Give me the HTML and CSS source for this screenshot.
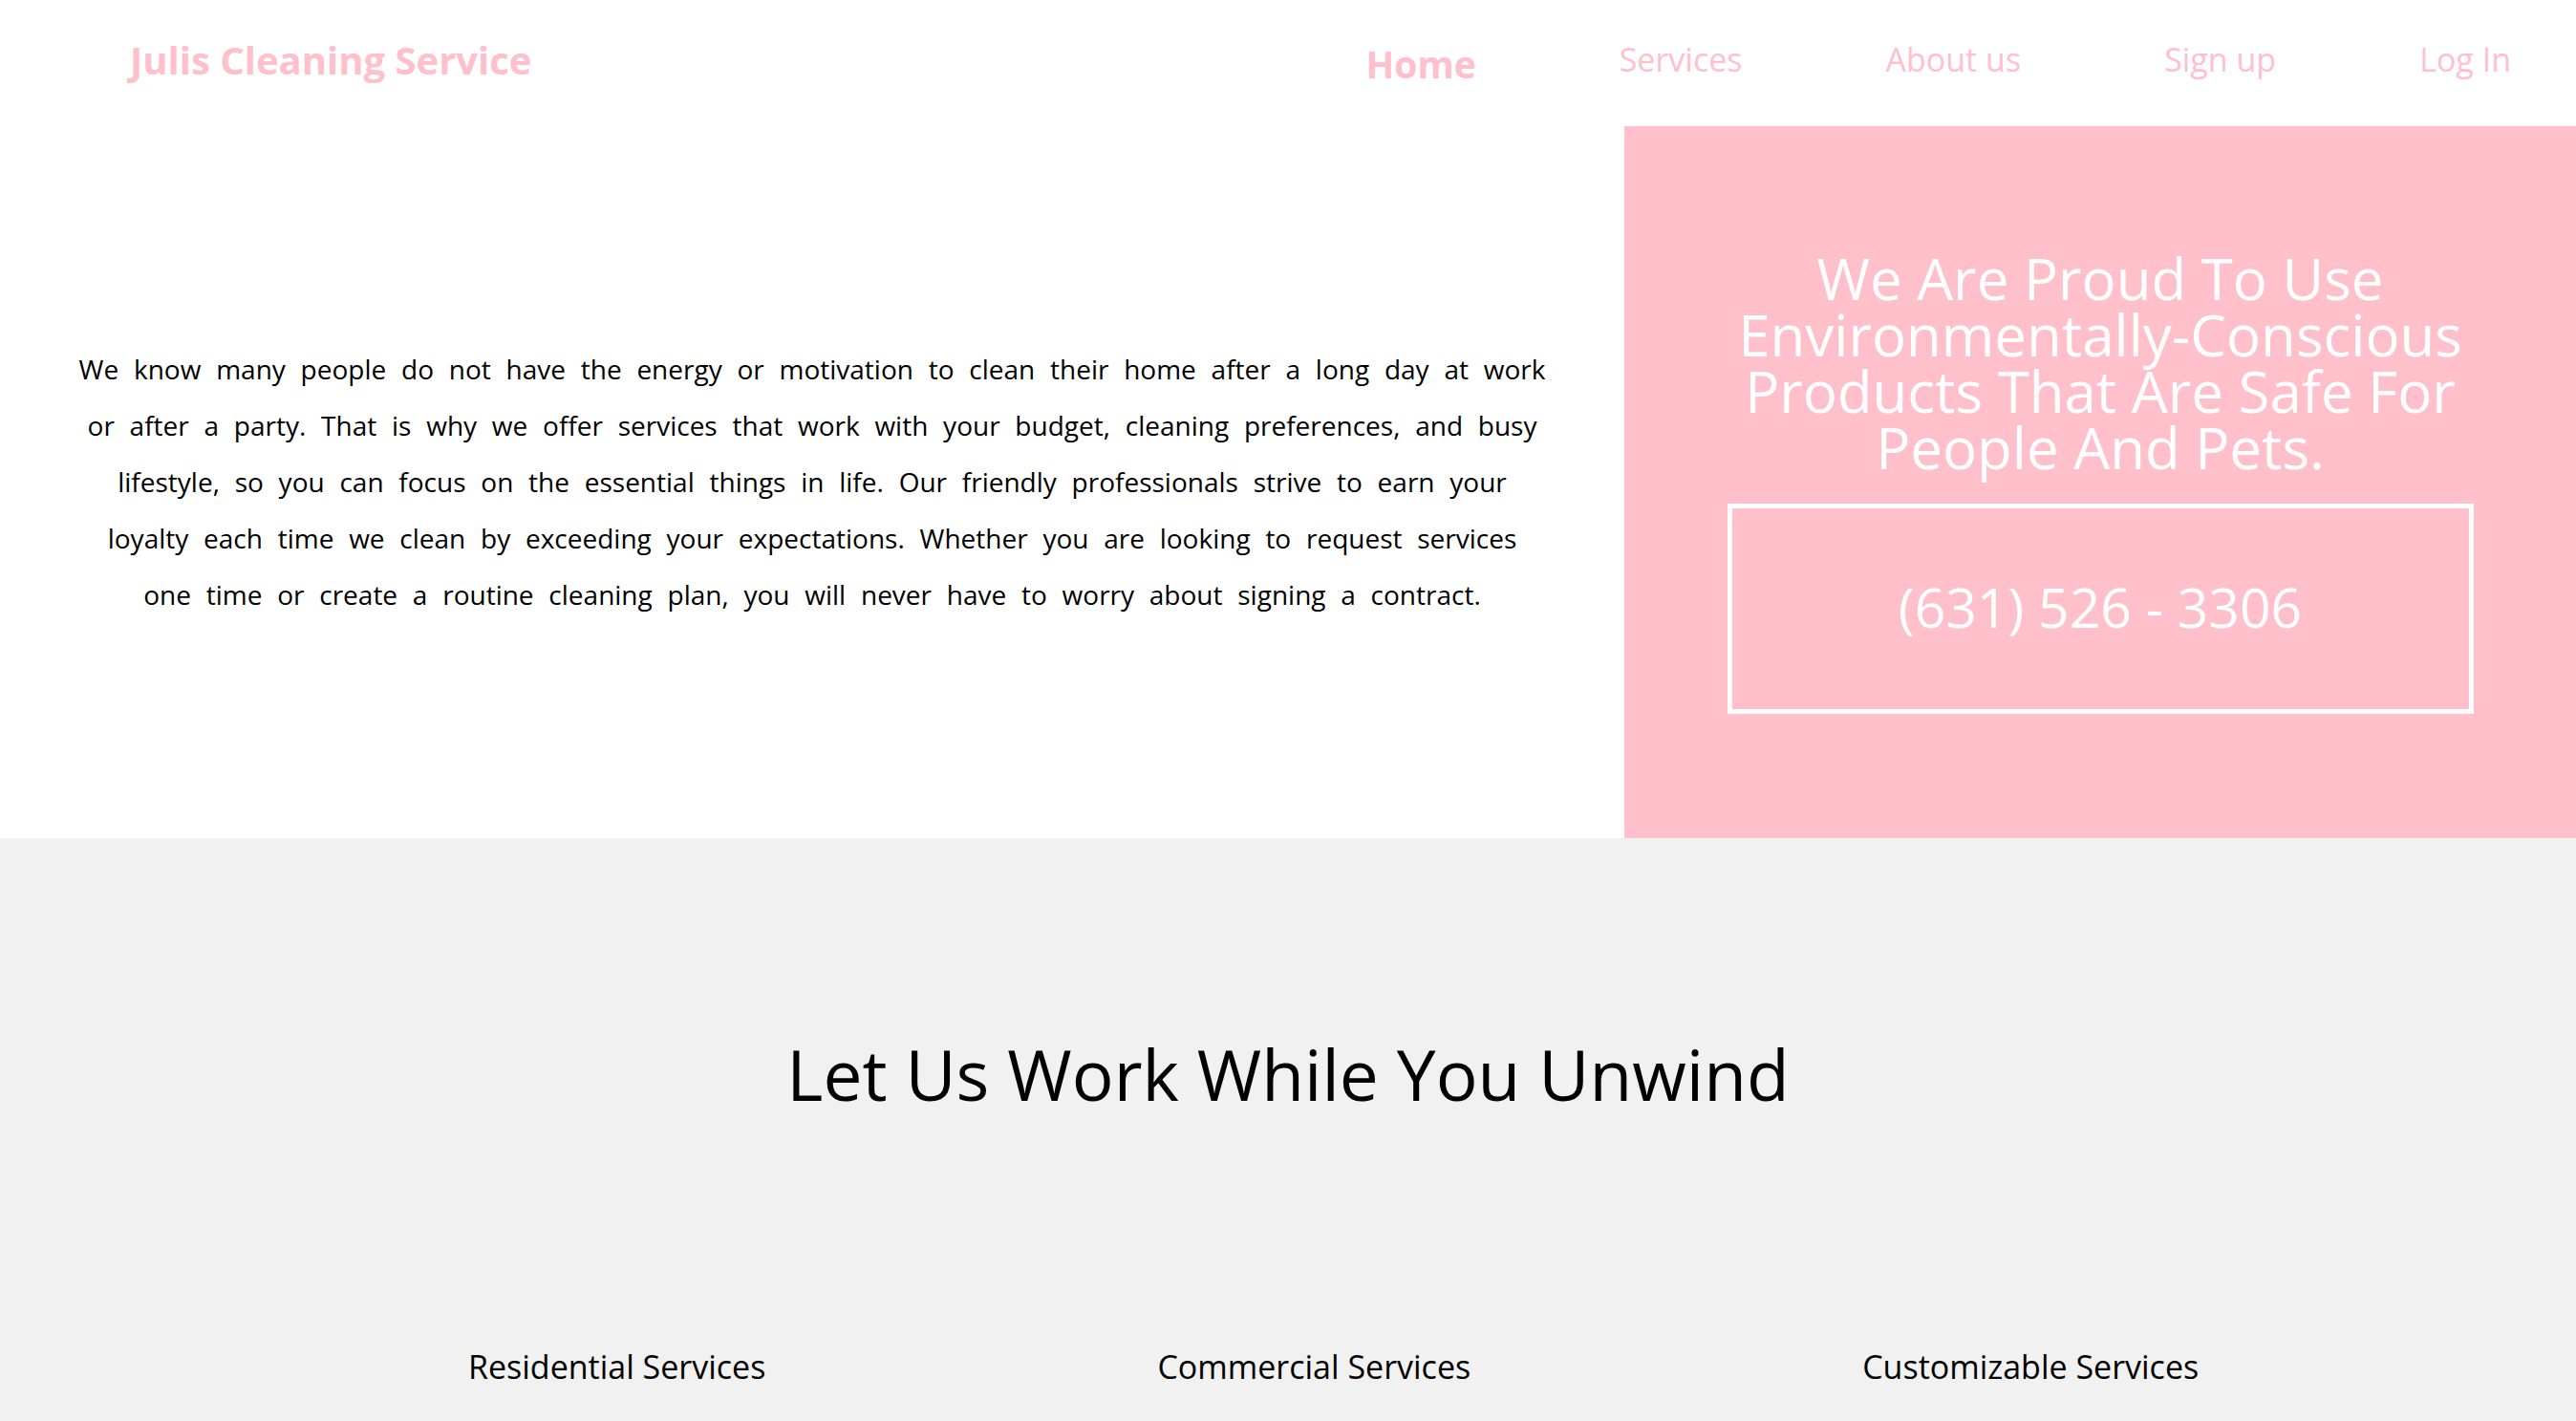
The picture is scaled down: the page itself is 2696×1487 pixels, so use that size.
FILE: index.html
```html
<!DOCTYPE html>
<html lang="en">
<head>
<meta charset="utf-8">
<title>Julis Cleaning Service</title>
<link rel="stylesheet" href="styles.css">
</head>
<body>
<header class="header">
  <div class="logo">Julis Cleaning Service</div>
  <nav class="nav">
    <a class="nav-link nav-active" href="#">Home</a>
    <a class="nav-link" href="#">Services</a>
    <a class="nav-link" href="#">About us</a>
    <a class="nav-link" href="#">Sign up</a>
    <a class="nav-link" href="#">Log In</a>
  </nav>
</header>
<section class="hero">
  <div class="intro">
    <p class="intro-text">We know many people do not have the energy or motivation to clean their home after a long day at work<br>or after a party. That is why we offer services that work with your budget, cleaning preferences, and busy<br>lifestyle, so you can focus on the essential things in life. Our friendly professionals strive to earn your<br>loyalty each time we clean by exceeding your expectations. Whether you are looking to request services<br>one time or create a routine cleaning plan, you will never have to worry about signing a contract.</p>
  </div>
  <div class="promo">
    <h2 class="promo-title">We Are Proud To Use<br>Environmentally-Conscious<br>Products That Are Safe For<br>People And Pets.</h2>
    <div class="phone-box">(631) 526 - 3306</div>
  </div>
</section>
<section class="services">
  <h1 class="services-title">Let Us Work While You Unwind</h1>
  <div class="services-row">
    <div class="service">Residential Services</div>
    <div class="service">Commercial Services</div>
    <div class="service">Customizable Services</div>
  </div>
</section>
</body>
</html>
```
FILE: styles.css
```css
* { box-sizing: border-box; }
body {
  margin: 0;
  font-family: "Open Sans", "Noto Sans", sans-serif;
  background: #ffffff;
  color: #000000;
}
.header {
  display: flex;
  align-items: center;
  justify-content: space-between;
  height: 132px;
  padding: 0 68px 8px 136px;
}
.logo {
  font-size: 40px;
  font-weight: 700;
  color: #ffc0cb;
}
.nav {
  display: flex;
  align-items: center;
  gap: 150px;
}
.nav-link {
  color: #ffc0cb;
  text-decoration: none;
  font-size: 34px;
}
.nav-active {
  font-weight: 700;
  font-size: 39px;
  margin-top: 8px;
}
.hero {
  display: flex;
  height: 745px;
}
.intro {
  flex: 1;
  display: flex;
  align-items: center;
  justify-content: center;
  padding: 0 40px;
}
.intro-text {
  margin: 0;
  font-size: 28px;
  line-height: 59px;
  text-align: center;
  word-spacing: 8.5px;
  white-space: nowrap;
}
.promo {
  width: 996px;
  background: #ffc0cb;
  display: flex;
  flex-direction: column;
  align-items: center;
  justify-content: center;
  gap: 29px;
  color: #ffffff;
}
.promo-title {
  margin: 0;
  font-size: 60px;
  font-weight: 400;
  line-height: 59px;
  text-align: center;
  white-space: nowrap;
}
.phone-box {
  width: 781px;
  height: 220px;
  border: 5px solid #ffffff;
  display: flex;
  align-items: center;
  justify-content: center;
  font-size: 57px;
  padding-bottom: 4px;
}
.services {
  background: #f1f1f1;
  padding: 201px 0 100px;
}
.services-title {
  margin: 0;
  font-size: 73px;
  font-weight: 400;
  line-height: 91px;
  text-align: center;
}
.services-row {
  display: flex;
  gap: 410px;
  padding-left: 490px;
  margin-top: 237px;
}
.service {
  font-size: 34px;
  line-height: 48px;
}
```
